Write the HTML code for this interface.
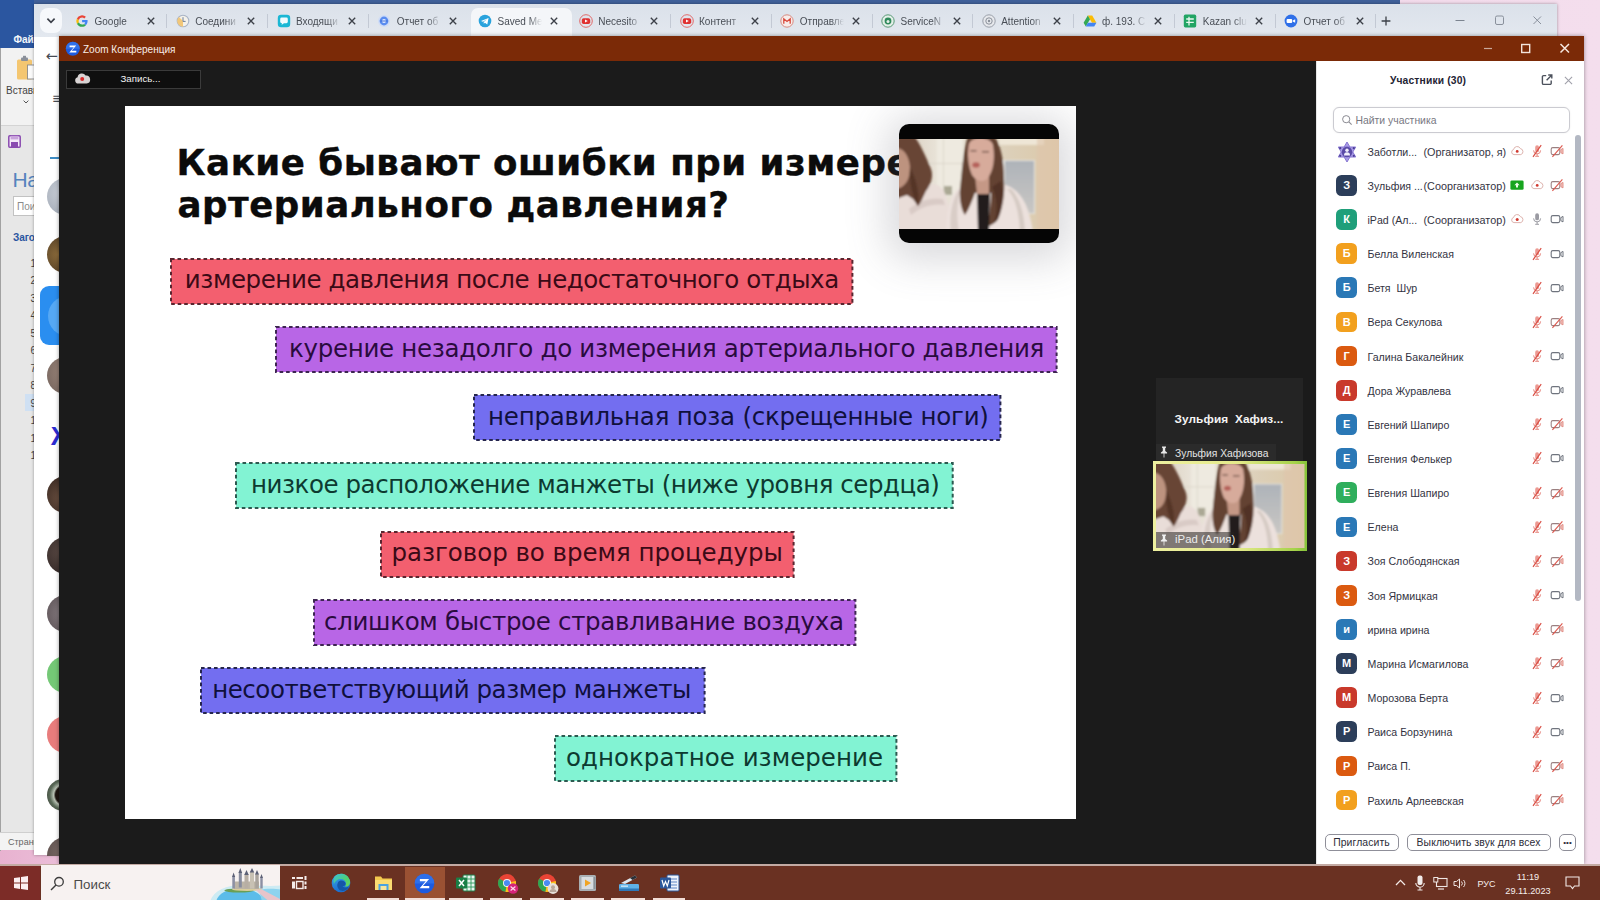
<!DOCTYPE html>
<html lang="ru"><head><meta charset="utf-8"><title>Zoom Конференция</title>
<style>
*{box-sizing:border-box;margin:0;padding:0}
html,body{width:1600px;height:900px;overflow:hidden}
body{position:relative;background:#f1deec;font-family:"Liberation Sans",sans-serif;font-size:11px;color:#222}
.abs{position:absolute}
.t{position:absolute;white-space:nowrap;line-height:1}
svg{position:absolute;overflow:visible}
/* desktop */
#desk{position:absolute;left:0;top:0;width:1600px;height:900px;background:linear-gradient(90deg,#e8b2d0 0,#ebbfd9 70px,#f3dcec 1450px,#f4deed 1600px)}
/* chrome */
#chrome{position:absolute;left:34px;top:4px;width:1523px;height:851px;background:#fff;box-shadow:0 0 3px rgba(0,0,0,.35)}
#tabbar{position:absolute;left:0;top:0;width:100%;height:33px;background:linear-gradient(#dbe1ea,#e3e8ef)}
/* zoom */
#zoom{position:absolute;left:59px;top:36px;width:1525px;height:828px;background:#1b1b1b;box-shadow:0 0 4px rgba(0,0,0,.4)}
#ztitle{position:absolute;left:0;top:0;width:100%;height:25px;background:#7b2a07}
#slide{position:absolute;left:125px;top:106px;width:951px;height:713px;background:#fff;overflow:hidden}
#panel{position:absolute;left:1316px;top:61px;width:268px;height:803px;background:#fff;border-left:1px solid #e6e6e6}
#taskbar{position:absolute;left:0;top:866px;width:1600px;height:34px;background:#6a3122}
/* slide */
.hd{font:bold 35.6px "DejaVu Sans","Liberation Sans",sans-serif;color:#0b0b0b;line-height:42px;-webkit-text-stroke:.4px #0b0b0b}
.bar{position:absolute;height:46px;border:2px dashed #3a2a3a}
.bar.r{background:#f25f6f;border-color:#5a2630}
.bar.p{background:#b765e6;border-color:#3c2450}
.bar.b{background:#726df0;border-color:#26264e}
.bar.g{background:#80f2d2;border-color:#2c5a50}
.bt{font:24.5px "DejaVu Sans","Liberation Sans",sans-serif;line-height:28px}
.bt.r{color:#3b0a16}.bt.p{color:#2a0b3e}.bt.b{color:#10103c}.bt.g{color:#0d3a30}
/* panel */
.av{position:absolute;left:1336px;width:21.3px;height:20.8px;border-radius:5.5px;color:#fff;font:bold 11px "Liberation Sans",sans-serif;line-height:20.8px;text-align:center}
.nm{left:1367.5px;font:10.6px "Liberation Sans",sans-serif;color:#33333f;white-space:pre}
.btn{position:absolute;top:833.5px;height:17.5px;border:1px solid #8f8f99;border-radius:5px;background:#fff;font:10.4px "Liberation Sans",sans-serif;line-height:15.5px;text-align:center;color:#2c2c38;white-space:nowrap;letter-spacing:.1px}
/* tabs */
.tabt{top:16px;width:44px;overflow:hidden;font:10px "Liberation Sans",sans-serif;color:#494e56;line-height:12px;-webkit-mask-image:linear-gradient(90deg,#000 70%,transparent 100%);mask-image:linear-gradient(90deg,#000 70%,transparent 100%)}

</style></head>
<body>
<div id="desk"></div>
<div class="abs" style="left:0;top:0;width:36px;height:850px;background:#e7e7e7"></div>
<div class="abs" style="left:0;top:0;width:1400px;height:47.500px;background:#2b56a0"></div>
<div class="abs" style="left:34px;top:0;width:1366px;height:4px;background:#40609a"></div>
<div class="abs" style="left:0;top:47.500px;width:36px;height:78px;background:#f2f2f2;border-bottom:1px solid #d4d4d4"></div>
<div class="abs" style="left:0;top:47.500px;width:1px;height:803px;background:#a2a2a2"></div>
<div class="t" style="left:13.500px;top:34px;font:bold 10px 'Liberation Sans',sans-serif;color:#f3f6fb">Файл</div>
<svg style="left:16px;top:55px" width="20" height="28" viewBox="0 0 20 28"><rect x="1" y="4.500" width="15" height="20" rx="1.500" fill="#f4c670"/><rect x="5" y="2.500" width="7" height="3.500" rx="1" fill="#8a8f99"/><rect x="7" y=".8" width="3" height="2.500" fill="#8a8f99"/><rect x="11.500" y="10" width="9" height="14" fill="#fbfbfb" stroke="#8b8b8b" stroke-width=".9"/></svg>
<div class="t" style="left:6px;top:84.500px;font:10px 'Liberation Sans',sans-serif;color:#444">Вставить</div>
<svg style="left:23px;top:100px" width="6" height="4" viewBox="0 0 6 4"><path d="M.6,.6 L3,3 L5.400,.6" fill="none" stroke="#555" stroke-width="1"/></svg>
<svg style="left:8px;top:134.500px" width="13" height="13" viewBox="0 0 13 13"><rect x=".8" y=".8" width="11.400" height="11.400" rx="1" fill="#f4e9f8" stroke="#8a4bb0" stroke-width="1.500"/><rect x="3" y="7" width="7" height="5" fill="#8a4bb0"/><rect x="2.600" y=".8" width="7.800" height="3.600" fill="#c9a3dc"/></svg>
<div class="t" style="left:12.500px;top:168px;font:21px 'Liberation Sans',sans-serif;color:#5583bd;letter-spacing:-.3px">Навигация</div>
<div class="abs" style="left:13px;top:195.500px;width:60px;height:20px;background:#fff;border:1px solid #c2c2c2"></div>
<div class="t" style="left:17px;top:201px;font:10px 'Liberation Sans',sans-serif;color:#8a8a8a">Поиск</div>
<div class="t" style="left:13px;top:231.500px;font:bold 10px 'Liberation Sans',sans-serif;color:#2b56a0">Заголовки</div>
<div class="abs" style="left:25px;top:394px;width:12px;height:17px;background:#cfe0f3"></div>
<div class="t" style="left:30.500px;top:257.5px;font:10px 'Liberation Sans',sans-serif;color:#444">1</div>
<div class="t" style="left:30.500px;top:275.0px;font:10px 'Liberation Sans',sans-serif;color:#444">2</div>
<div class="t" style="left:30.500px;top:292.5px;font:10px 'Liberation Sans',sans-serif;color:#444">3</div>
<div class="t" style="left:30.500px;top:310.0px;font:10px 'Liberation Sans',sans-serif;color:#444">4</div>
<div class="t" style="left:30.500px;top:327.5px;font:10px 'Liberation Sans',sans-serif;color:#444">5</div>
<div class="t" style="left:30.500px;top:345.0px;font:10px 'Liberation Sans',sans-serif;color:#444">6</div>
<div class="t" style="left:30.500px;top:362.5px;font:10px 'Liberation Sans',sans-serif;color:#444">7</div>
<div class="t" style="left:30.500px;top:380.0px;font:10px 'Liberation Sans',sans-serif;color:#444">8</div>
<div class="t" style="left:30.500px;top:397.5px;font:10px 'Liberation Sans',sans-serif;color:#444">9</div>
<div class="t" style="left:30.500px;top:415.0px;font:10px 'Liberation Sans',sans-serif;color:#444">10</div>
<div class="t" style="left:30.500px;top:432.5px;font:10px 'Liberation Sans',sans-serif;color:#444">11</div>
<div class="t" style="left:30.500px;top:450.0px;font:10px 'Liberation Sans',sans-serif;color:#444">12</div>
<div class="abs" style="left:0;top:832px;width:36px;height:18px;background:#f3f3f3;border-top:1px solid #cfcfcf"></div>
<div class="t" style="left:8px;top:837px;font:9px 'Liberation Sans',sans-serif;color:#666">Страница</div>
<div id="chrome"><div id="tabbar"></div></div>
<div class="abs" style="left:40px;top:8px;width:21.500px;height:25px;border-radius:8px;background:#f6f8fb"></div>
<svg style="left:46px;top:17px" width="10" height="8" viewBox="0 0 10 8"><path d="M1.400,1.600 L5,5.400 L8.600,1.600" fill="none" stroke="#3b3f48" stroke-width="1.600"/></svg>
<svg style="left:75.0px;top:14.0px" width="14" height="14" viewBox="0 0 14 14"><path d="M12.6,7.1 c0,-.4 0,-.8 -.1,-1.1 H7.1 v2.2 h3.1 a2.7,2.7 0 0 1 -1.1,1.7 l1.8,1.4 c1.1,-1 1.7,-2.5 1.7,-4.2z" fill="#4285f4"/><path d="M7.1,12.8 c1.5,0 2.8,-.5 3.8,-1.4 l-1.8,-1.4 c-.5,.3 -1.200,.6 -2,.6 a3.500,3.500 0 0 1 -3.300,-2.400 l-1.900,1.500 a5.700,5.700 0 0 0 5.200,3.100z" fill="#34a853"/><path d="M3.800,8.200 a3.400,3.400 0 0 1 0,-2.200 l-1.900,-1.500 a5.700,5.700 0 0 0 0,5.200z" fill="#fbbc05"/><path d="M7.100,3.600 c.8,0 1.600,.3 2.200,.8 l1.600,-1.600 a5.700,5.700 0 0 0 -9,1.700 l1.900,1.500 a3.500,3.500 0 0 1 3.300,-2.400z" fill="#ea4335"/></svg>
<div class="t tabt" style="left:94.5px">Google</div>
<svg style="left:146.5px;top:17px" width="8" height="8" viewBox="0 0 8 8"><path d="M.8,.8 L7.200,7.200 M7.200,.8 L.8,7.200" stroke="#3c4048" stroke-width="1.350" fill="none"/></svg>
<div class="abs" style="left:166.2px;top:14px;width:1px;height:14px;background:#c3c9d4"></div>
<svg style="left:175.8px;top:14.0px" width="14" height="14" viewBox="0 0 14 14"><circle cx="7" cy="7" r="5.8" fill="#f4f1ea" stroke="#a9b4c6" stroke-width="1.1"/><path d="M7,7 L7,12.800 a5.800,5.800 0 0 1 -5.800,-5.800 a5.800,5.800 0 0 1 1.700,-4.100z" fill="#f2c779"/><path d="M7,3.200 V7.400 H9.600" stroke="#6c7f9c" stroke-width="1" fill="none"/></svg>
<div class="t tabt" style="left:195.2px">Соедини</div>
<svg style="left:247.2px;top:17px" width="8" height="8" viewBox="0 0 8 8"><path d="M.8,.8 L7.200,7.200 M7.200,.8 L.8,7.200" stroke="#3c4048" stroke-width="1.350" fill="none"/></svg>
<div class="abs" style="left:267.0px;top:14px;width:1px;height:14px;background:#c3c9d4"></div>
<svg style="left:276.5px;top:14.0px" width="14" height="14" viewBox="0 0 14 14"><rect x=".8" y=".8" width="12.4" height="12.4" rx="3.200" fill="#1bb7d4"/><rect x="3.200" y="3.600" width="7.600" height="5.600" rx="1.400" fill="#f2fbfd"/><path d="M5,9 L4.600,11 L7,9z" fill="#f2fbfd"/></svg>
<div class="t tabt" style="left:296.0px">Входящи</div>
<svg style="left:348.0px;top:17px" width="8" height="8" viewBox="0 0 8 8"><path d="M.8,.8 L7.200,7.200 M7.200,.8 L.8,7.200" stroke="#3c4048" stroke-width="1.350" fill="none"/></svg>
<div class="abs" style="left:367.8px;top:14px;width:1px;height:14px;background:#c3c9d4"></div>
<svg style="left:377.2px;top:14.0px" width="14" height="14" viewBox="0 0 14 14"><circle cx="7" cy="7" r="6" fill="#cfdcf6"/><circle cx="7" cy="7" r="4.400" fill="#5b8df0"/><circle cx="7" cy="7" r="2" fill="#e8f0ff"/><path d="M3.200,7 h7.600" stroke="#3f6fd8" stroke-width="1"/></svg>
<div class="t tabt" style="left:396.8px">Отчет об</div>
<svg style="left:448.8px;top:17px" width="8" height="8" viewBox="0 0 8 8"><path d="M.8,.8 L7.200,7.200 M7.200,.8 L.8,7.200" stroke="#3c4048" stroke-width="1.350" fill="none"/></svg>
<div class="abs" style="left:471.0px;top:8px;width:101.2px;height:29px;background:#f4f6f9;border-radius:7px 7px 0 0"></div>
<svg style="left:478.0px;top:14.0px" width="14" height="14" viewBox="0 0 14 14"><circle cx="7" cy="7" r="6.300" fill="#2aa3dd"/><path d="M3,6.900 L10.600,3.900 L9.300,10.400 L6.900,8.700 L5.800,9.800 L5.700,8 L9,5.200 L4.900,7.700z" fill="#fff"/></svg>
<div class="t tabt" style="left:497.5px">Saved Me</div>
<svg style="left:549.5px;top:17px" width="8" height="8" viewBox="0 0 8 8"><path d="M.8,.8 L7.200,7.200 M7.200,.8 L.8,7.200" stroke="#3c4048" stroke-width="1.350" fill="none"/></svg>
<svg style="left:578.8px;top:14.0px" width="14" height="14" viewBox="0 0 14 14"><circle cx="7" cy="7" r="6.300" fill="none" stroke="#e26a6a" stroke-width="1"/><rect x="2.800" y="4.200" width="8.400" height="5.800" rx="1.800" fill="#e03131"/><path d="M6,5.600 L8.800,7.100 L6,8.600z" fill="#fff"/></svg>
<div class="t tabt" style="left:598.2px">Necesito</div>
<svg style="left:650.2px;top:17px" width="8" height="8" viewBox="0 0 8 8"><path d="M.8,.8 L7.200,7.200 M7.200,.8 L.8,7.200" stroke="#3c4048" stroke-width="1.350" fill="none"/></svg>
<div class="abs" style="left:670.0px;top:14px;width:1px;height:14px;background:#c3c9d4"></div>
<svg style="left:679.5px;top:14.0px" width="14" height="14" viewBox="0 0 14 14"><circle cx="7" cy="7" r="6.300" fill="none" stroke="#e26a6a" stroke-width="1"/><rect x="2.800" y="4.200" width="8.400" height="5.800" rx="1.800" fill="#e03131"/><path d="M6,5.600 L8.800,7.100 L6,8.600z" fill="#fff"/></svg>
<div class="t tabt" style="left:699.0px">Контент</div>
<svg style="left:751.0px;top:17px" width="8" height="8" viewBox="0 0 8 8"><path d="M.8,.8 L7.200,7.200 M7.200,.8 L.8,7.200" stroke="#3c4048" stroke-width="1.350" fill="none"/></svg>
<div class="abs" style="left:770.8px;top:14px;width:1px;height:14px;background:#c3c9d4"></div>
<svg style="left:780.2px;top:14.0px" width="14" height="14" viewBox="0 0 14 14"><circle cx="7" cy="7" r="6.200" fill="#f7ecea" stroke="#d88a80" stroke-width="1"/><path d="M3.800,9.800 V4.800 L7,7.400 L10.200,4.800 V9.800" fill="none" stroke="#d9483b" stroke-width="1.300"/></svg>
<div class="t tabt" style="left:799.8px">Отправле</div>
<svg style="left:851.8px;top:17px" width="8" height="8" viewBox="0 0 8 8"><path d="M.8,.8 L7.200,7.200 M7.200,.8 L.8,7.200" stroke="#3c4048" stroke-width="1.350" fill="none"/></svg>
<div class="abs" style="left:871.5px;top:14px;width:1px;height:14px;background:#c3c9d4"></div>
<svg style="left:881.0px;top:14.0px" width="14" height="14" viewBox="0 0 14 14"><circle cx="7" cy="7" r="6.200" fill="#e4efe8" stroke="#5a9a77" stroke-width="1"/><circle cx="7" cy="7" r="3.400" fill="#2f8a5b"/><circle cx="7" cy="7.600" r="1.500" fill="#e4efe8"/></svg>
<div class="t tabt" style="left:900.5px">ServiceN</div>
<svg style="left:952.5px;top:17px" width="8" height="8" viewBox="0 0 8 8"><path d="M.8,.8 L7.200,7.200 M7.200,.8 L.8,7.200" stroke="#3c4048" stroke-width="1.350" fill="none"/></svg>
<div class="abs" style="left:972.2px;top:14px;width:1px;height:14px;background:#c3c9d4"></div>
<svg style="left:981.8px;top:14.0px" width="14" height="14" viewBox="0 0 14 14"><circle cx="7" cy="7" r="6.200" fill="#e6e8ec" stroke="#9aa0aa" stroke-width="1"/><circle cx="7" cy="7" r="3.200" fill="none" stroke="#8a909a" stroke-width="1"/><circle cx="7" cy="7" r="1.200" fill="#8a909a"/></svg>
<div class="t tabt" style="left:1001.2px">Attention</div>
<svg style="left:1053.2px;top:17px" width="8" height="8" viewBox="0 0 8 8"><path d="M.8,.8 L7.200,7.200 M7.200,.8 L.8,7.200" stroke="#3c4048" stroke-width="1.350" fill="none"/></svg>
<div class="abs" style="left:1073.0px;top:14px;width:1px;height:14px;background:#c3c9d4"></div>
<svg style="left:1082.5px;top:14.0px" width="14" height="14" viewBox="0 0 14 14"><path d="M4.800,1.600 H9.200 L13.400,8.800 H9z" fill="#fbbc05"/><path d="M4.800,1.600 L.6,8.800 L2.800,12.400 L7,5.300z" fill="#34a853"/><path d="M4.900,8.800 H13.400 L11.200,12.400 H2.800z" fill="#4285f4"/></svg>
<div class="t tabt" style="left:1102.0px">ф. 193. С</div>
<svg style="left:1154.0px;top:17px" width="8" height="8" viewBox="0 0 8 8"><path d="M.8,.8 L7.200,7.200 M7.200,.8 L.8,7.200" stroke="#3c4048" stroke-width="1.350" fill="none"/></svg>
<div class="abs" style="left:1173.8px;top:14px;width:1px;height:14px;background:#c3c9d4"></div>
<svg style="left:1183.2px;top:14.0px" width="14" height="14" viewBox="0 0 14 14"><rect x=".8" y=".6" width="12.400" height="12.800" rx="1.600" fill="#21a464"/><path d="M3.200,5 h7.600 M3.200,8.400 h7.600 M6,2.800 v8.600" stroke="#e9f8ef" stroke-width="1.300" fill="none"/></svg>
<div class="t tabt" style="left:1202.8px">Kazan clu</div>
<svg style="left:1254.8px;top:17px" width="8" height="8" viewBox="0 0 8 8"><path d="M.8,.8 L7.200,7.200 M7.200,.8 L.8,7.200" stroke="#3c4048" stroke-width="1.350" fill="none"/></svg>
<div class="abs" style="left:1274.5px;top:14px;width:1px;height:14px;background:#c3c9d4"></div>
<svg style="left:1284.0px;top:14.0px" width="14" height="14" viewBox="0 0 14 14"><circle cx="7" cy="7" r="6.400" fill="#2f6fe8"/><rect x="2.600" y="5" width="5.600" height="4" rx="1" fill="#fff"/><path d="M8.800,6.600 L11.200,5.200 V8.800 L8.800,7.400z" fill="#fff"/></svg>
<div class="t tabt" style="left:1303.5px">Отчет об</div>
<svg style="left:1355.5px;top:17px" width="8" height="8" viewBox="0 0 8 8"><path d="M.8,.8 L7.200,7.200 M7.200,.8 L.8,7.200" stroke="#3c4048" stroke-width="1.350" fill="none"/></svg>
<div class="abs" style="left:1375.2px;top:14px;width:1px;height:14px;background:#c3c9d4"></div>
<svg style="left:1380.500px;top:16px" width="10" height="10" viewBox="0 0 10 10"><path d="M5,.6 V9.400 M.6,5 H9.400" stroke="#3c4048" stroke-width="1.300" fill="none"/></svg>
<svg style="left:1450px;top:12px" width="100" height="18" viewBox="0 0 100 18"><path d="M5.500,8.500 H14.500" stroke="#7c8490" stroke-width="1"/><rect x="45.500" y="4" width="8" height="8.500" rx="1.500" fill="none" stroke="#8a919c" stroke-width="1"/><path d="M83.500,4.500 L91,12 M91,4.500 L83.500,12" stroke="#8a919c" stroke-width="1" fill="none"/></svg>
<div class="t" style="left:45.500px;top:48px;font:14.500px 'DejaVu Sans',sans-serif;color:#454a52">←</div>
<div class="t" style="left:52px;top:89.500px;font:14px 'DejaVu Sans',sans-serif;color:#454a52">≡</div>
<div class="abs" style="left:50px;top:156.500px;width:10px;height:2px;background:#3d8cc4"></div>
<div class="abs" style="left:47px;top:177.5px;width:13px;height:37.0px;overflow:hidden"><div style="width:37.0px;height:37.0px;border-radius:50%;background:radial-gradient(circle at 40% 40%,#c9ced6,#9aa3b0)"></div></div>
<div class="abs" style="left:47px;top:235.5px;width:13px;height:37.0px;overflow:hidden"><div style="width:37.0px;height:37.0px;border-radius:50%;background:radial-gradient(circle at 30% 50%,#8a6a3a,#3a2a1c)"></div></div>
<div class="abs" style="left:39.500px;top:285.500px;width:22px;height:59px;border-radius:9px 0 0 9px;background:#2a8ef0;overflow:hidden"><div style="position:absolute;left:8px;top:10px;width:40px;height:40px;border-radius:50%;background:#55a8f4"></div></div>
<div class="abs" style="left:47px;top:356.5px;width:13px;height:37.0px;overflow:hidden"><div style="width:37.0px;height:37.0px;border-radius:50%;background:radial-gradient(circle at 60% 40%,#a58d80,#6f605a)"></div></div>
<div class="t" style="left:51px;top:421px;font:bold 26px 'Liberation Sans',sans-serif;color:#2b2bd0">Ж</div>
<div class="abs" style="left:47px;top:475.5px;width:13px;height:37.0px;overflow:hidden"><div style="width:37.0px;height:37.0px;border-radius:50%;background:radial-gradient(circle at 40% 60%,#6a5040,#2a1c18)"></div></div>
<div class="abs" style="left:47px;top:536.5px;width:13px;height:37.0px;overflow:hidden"><div style="width:37.0px;height:37.0px;border-radius:50%;background:radial-gradient(circle at 40% 40%,#5a4a44,#2a2020)"></div></div>
<div class="abs" style="left:47px;top:595.2px;width:13px;height:37.0px;overflow:hidden"><div style="width:37.0px;height:37.0px;border-radius:50%;background:radial-gradient(circle at 50% 50%,#8a8084,#5a5054)"></div></div>
<div class="abs" style="left:47px;top:655.5px;width:13px;height:37.0px;overflow:hidden"><div style="width:37.0px;height:37.0px;border-radius:50%;background:#74c876"></div></div>
<div class="abs" style="left:47px;top:715.5px;width:13px;height:37.0px;overflow:hidden"><div style="width:37.0px;height:37.0px;border-radius:50%;background:#e87c7c"></div></div>
<div class="abs" style="left:47px;top:778.6px;width:13px;height:32.0px;overflow:hidden"><div style="width:32.0px;height:32.0px;border-radius:50%;background:radial-gradient(circle at 55% 50%,#1c1410 0,#1c1410 38%,#b9c2b4 46%,#5a6a58 62%,#2a2a26 100%)"></div></div>
<div class="abs" style="left:47px;top:837px;width:13px;height:18.500px;overflow:hidden"><div style="width:37px;height:37px;border-radius:50%;background:radial-gradient(circle at 40% 40%,#7a6a66,#4a3e3c)"></div></div>
<div id="zoom"><div id="ztitle"></div></div>
<svg style="left:64.5px;top:40.5px" width="16" height="16" viewBox="0 0 15 15"><circle cx="7.3" cy="7.3" r="6.6" fill="#1d5be0"/><path d="M7.3,.7 a6.6,6.6 0 0 0 -6.6,6.6 L14,7.3 a6.6,6.6 0 0 0 -6.7,-6.6z" fill="#3f83f2" opacity=".55"/><path d="M4.3,4.3 H10.5 L6.2,9.2 H10.6 V10.7 H4 L8.3,5.8 H4.3 Z" fill="#fff"/></svg>
<div class="t" style="left:83px;top:43.5px;font:10px 'Liberation Sans',sans-serif;color:#f9eee8">Zoom Конференция</div>
<svg style="left:1480px;top:40px" width="100" height="18" viewBox="0 0 100 18"><path d="M4,8.5 H12" stroke="#c9a89a" stroke-width="1.2" fill="none"/><rect x="41.7" y="4.5" width="8" height="8" fill="none" stroke="#f3e4dc" stroke-width="1.4"/><path d="M80.5,4 L89,12.5 M89,4 L80.5,12.5" stroke="#f6e8e0" stroke-width="1.5" fill="none"/></svg>
<div class="abs" style="left:65.5px;top:69.5px;width:135.5px;height:19.5px;background:#0f0f0f;border:1px solid #3b3b3b"></div>
<svg style="left:74px;top:72px" width="17" height="13" viewBox="0 0 17 13"><path d="M4.2,11.6 A3.2,3.2 0 0 1 3.6,5.3 A4.3,4.3 0 0 1 11.6,3.6 A3.9,3.9 0 0 1 12.6,11.6 Z" fill="#d9d4d4"/><circle cx="8.2" cy="7" r="2" fill="#d92a2a"/></svg>
<div class="t" style="left:120.5px;top:72.5px;font:9.7px 'Liberation Sans',sans-serif;color:#f0f0f0">Запись...</div>
<div id="slide"></div>
<div class="t hd" style="left:176.5px;top:142px;letter-spacing:.52px">Какие бывают ошибки при измерении</div>
<div class="t hd" style="left:177.5px;top:184.3px;letter-spacing:.52px">артериального давления?</div>
<svg style="left:170.2px;top:257.6px" width="683.4" height="47.0"><rect x="1" y="1" width="681.4" height="45.0" fill="#f35f6f" stroke="#5a2630" stroke-width="2" stroke-dasharray="3.6 2.9"/></svg>
<div class="t bt r" style="left:184.8px;top:266.2px;letter-spacing:-0.43px">измерение давления после недостаточного отдыха</div>
<svg style="left:274.8px;top:325.9px" width="782.6" height="47.0"><rect x="1" y="1" width="780.6" height="45.0" fill="#b866e6" stroke="#3e2552" stroke-width="2" stroke-dasharray="3.6 2.9"/></svg>
<div class="t bt p" style="left:289.0px;top:334.5px;letter-spacing:-0.31px">курение незадолго до измерения артериального давления</div>
<svg style="left:473.2px;top:394.1px" width="528.4" height="47.0"><rect x="1" y="1" width="526.4" height="45.0" fill="#736ef0" stroke="#26264e" stroke-width="2" stroke-dasharray="3.6 2.9"/></svg>
<div class="t bt b" style="left:488.0px;top:402.7px;letter-spacing:-0.23px">неправильная поза (скрещенные ноги)</div>
<svg style="left:235.3px;top:462.4px" width="718.7" height="47.0"><rect x="1" y="1" width="716.7" height="45.0" fill="#82f3d3" stroke="#2c5a50" stroke-width="2" stroke-dasharray="3.6 2.9"/></svg>
<div class="t bt g" style="left:251.0px;top:471.0px;letter-spacing:-0.45px">низкое расположение манжеты (ниже уровня сердца)</div>
<svg style="left:380.2px;top:530.6px" width="414.6" height="47.0"><rect x="1" y="1" width="412.6" height="45.0" fill="#f35f6f" stroke="#5a2630" stroke-width="2" stroke-dasharray="3.6 2.9"/></svg>
<div class="t bt r" style="left:391.5px;top:539.2px;letter-spacing:-0.03px">разговор во время процедуры</div>
<svg style="left:312.8px;top:598.9px" width="543.4" height="47.0"><rect x="1" y="1" width="541.4" height="45.0" fill="#b866e6" stroke="#3e2552" stroke-width="2" stroke-dasharray="3.6 2.9"/></svg>
<div class="t bt p" style="left:324.0px;top:607.5px;letter-spacing:-0.32px">слишком быстрое стравливание воздуха</div>
<svg style="left:200.2px;top:667.1px" width="505.6" height="47.0"><rect x="1" y="1" width="503.6" height="45.0" fill="#736ef0" stroke="#26264e" stroke-width="2" stroke-dasharray="3.6 2.9"/></svg>
<div class="t bt b" style="left:212.2px;top:675.7px;letter-spacing:-0.46px">несоответствующий размер манжеты</div>
<svg style="left:553.8px;top:735.4px" width="343.4" height="47.0"><rect x="1" y="1" width="341.4" height="45.0" fill="#82f3d3" stroke="#2c5a50" stroke-width="2" stroke-dasharray="3.6 2.9"/></svg>
<div class="t bt g" style="left:566.0px;top:744.0px;letter-spacing:0.02px">однократное измерение</div>
<svg width="0" height="0" style="left:0;top:0">
 <defs>
  <filter id="vb" x="-5%" y="-5%" width="110%" height="110%"><feGaussianBlur stdDeviation="1.1"/></filter>
  <linearGradient id="wallg" x1="0" x2="1" y1="0" y2="0">
   <stop offset="0" stop-color="#d9cdbd"/><stop offset=".25" stop-color="#e9e4d9"/><stop offset=".42" stop-color="#e3dccd"/><stop offset=".7" stop-color="#dccfb8"/><stop offset="1" stop-color="#dcc9a8"/>
  </linearGradient>
  <linearGradient id="mirg" x1="0" x2="0" y1="0" y2="1"><stop offset="0" stop-color="#aeb3b9"/><stop offset="1" stop-color="#c9c7c4"/></linearGradient>
  <symbol id="cam" viewBox="0 0 160 90" preserveAspectRatio="none">
   <rect width="160" height="90" fill="url(#wallg)"/>
   <g filter="url(#vb)">
    <rect x="38" y="-3" width="26" height="60" fill="#eeeae0"/>
    <rect x="44" y="-2" width="1" height="55" fill="#dcd7cb"/>
    <rect x="20" y="24" width="45" height="1" fill="#dcd6ca"/>
    <rect x="100" y="-3" width="45" height="9" fill="#eee6d6"/>
    <rect x="104" y="21" width="32" height="54" fill="#e4e2de"/>
    <rect x="106" y="22" width="29" height="52" fill="url(#mirg)"/>
    <rect x="138" y="-3" width="25" height="96" fill="#dfc5aa" opacity=".6"/>
    <rect x="45" y="47" width="8" height="9" fill="#aaa894"/>
    <!-- left woman -->
    <path d="M-3,60 C6,52 20,47 36,45 C46,48 51,60 52,93 L-3,93 Z" fill="#e9ddd8"/>
    <path d="M10,70 C20,62 32,58 44,60 L46,66 C34,64 22,68 12,76z" fill="#d9cbc6"/>
    <path d="M-3,-3 L15,-3 C22,6 27,18 32,30 C35,38 31,47 27,52 C24,58 22,64 19,67 L14,60 L8,56 L-3,60 Z" fill="#684535"/>
    <path d="M-3,9 C4,9 10,16 11,28 C11,40 7,48 -3,50 Z" fill="#bd937f"/>
    <path d="M11,28 C16,38 21,52 19,67 C13,58 10,42 11,28 Z" fill="#553628"/>
    <!-- right woman coat -->
    <path d="M47,93 C48,66 52,52 64,47 L104,45 C122,50 130,66 134,93 Z" fill="#ece1dd"/>
    <path d="M63,48 C58,60 57,76 60,93 L52,93 C50,74 54,56 63,48Z" fill="#d9cdc7"/>
    <path d="M108,50 C116,58 120,72 121,93 L126,93 C125,72 120,58 112,50z" fill="#d6cbc4"/>
    <!-- hair right -->
    <path d="M69,-3 C64,12 63,32 61,50 C60,62 63,72 66,76 C70,70 73,62 76,54 L92,54 C92,66 90,80 88,88 C92,86 97,84 99,80 C104,68 106,54 105,40 C105,22 102,6 95,-3 Z" fill="#644333"/>
    <path d="M93,48 C98,58 99,72 95,84 L99,80 C104,68 105,54 102,42 Z" fill="#513326"/>
    <!-- shirt -->
    <path d="M78,53 L91,53 L90,93 L79,93 Z" fill="#231a1c"/>
    <!-- neck & face -->
    <path d="M76,36 L90,36 L90,55 L78,55 Z" fill="#c59886"/>
    <path d="M70,5 C73,-3 91,-3 94,6 C96,18 95,32 88,40 C83,44 77,42 73,36 C69,27 68,14 70,5 Z" fill="#d7ab9b"/>
    <ellipse cx="77" cy="26" rx="3.800" ry="2.700" fill="#b5605a"/>
    <rect x="71.500" y="11" width="6" height="1.500" fill="#7a5a50"/><rect x="83" y="12" width="7" height="1.500" fill="#7a5a50"/>
   </g>
  </symbol>
 </defs>
</svg>
<!-- video in slide -->
<div class="abs" style="left:125px;top:106px;width:951px;height:713px;overflow:hidden;pointer-events:none"><div class="abs" style="left:774px;top:18px;width:159.5px;height:118.5px;border-radius:10px;background:#050505;box-shadow:0 5px 42px 12px rgba(95,95,108,.24)"></div></div>
<svg style="left:899px;top:138.5px" width="160" height="90"><use href="#cam" width="160" height="90"/></svg>
<!-- tiles -->
<div class="abs" style="left:1155.5px;top:377.5px;width:147px;height:83px;background:#242424"></div>
<div class="t" style="left:1155.5px;top:412px;width:147px;text-align:center;font:bold 11.8px 'Liberation Sans',sans-serif;color:#f4f4f4;letter-spacing:.1px;white-space:pre">Зульфия  Хафиз...</div>
<div class="abs" style="left:1155.5px;top:444px;width:120px;height:16px;background:#2b2b2b"></div>
<svg style="left:1159px;top:446px" width="10" height="12" viewBox="0 0 10 12"><path d="M3,0.5 h4 v1 l-0.8,0.8 v2.6 l1.9,1.7 v0.9 H1.9 v-0.9 l1.9,-1.7 V2.3 L3,1.5 Z M4.6,7.5 h0.8 v4 h-0.8z" fill="#e8e8e8"/></svg>
<div class="t" style="left:1175px;top:447.5px;font:10.3px 'Liberation Sans',sans-serif;color:#e4e4e4">Зульфия Хафизова</div>
<div class="abs" style="left:1152.5px;top:461px;width:154.5px;height:90px;background:linear-gradient(90deg,#eef0a0 0,#e4ea8a 55%,#a6d24a 92%,#86c43a 100%)"></div>
<svg style="left:1155.5px;top:464px" width="148.5" height="84"><use href="#cam" width="148.5" height="84"/></svg>
<div class="abs" style="left:1155.5px;top:532px;width:78px;height:16px;background:rgba(40,36,34,.55)"></div>
<svg style="left:1159px;top:534px" width="10" height="12" viewBox="0 0 10 12"><path d="M3,0.5 h4 v1 l-0.8,0.8 v2.6 l1.9,1.7 v0.9 H1.9 v-0.9 l1.9,-1.7 V2.3 L3,1.5 Z M4.6,7.5 h0.8 v4 h-0.8z" fill="#f0f0f0"/></svg>
<div class="t" style="left:1175px;top:533px;font:11.4px 'Liberation Sans',sans-serif;color:#ececec">iPad (Алия)</div>
<div id="panel"></div>
<svg width="0" height="0" style="left:0;top:0"><defs>
<g id="i-micoff"><path d="M5.2,3.2 a1.9,1.9 0 0 1 3.8,0 v3.2 a1.9,1.9 0 0 1 -3.8,0z" fill="#ec9a93"/><path d="M3.6,6.4 a3.5,3.5 0 0 0 7,0 M7.1,9.9 v2.2 M5.2,12.3 h3.8" stroke="#e5877f" stroke-width="1" fill="none"/><path d="M11.2,1.2 L3,12.8" stroke="#d94f45" stroke-width="1.2" fill="none"/></g>
<g id="i-mic"><path d="M5.2,3.2 a1.9,1.9 0 0 1 3.8,0 v3.2 a1.9,1.9 0 0 1 -3.8,0z" fill="#9a9aa2"/><path d="M3.6,6.4 a3.5,3.5 0 0 0 7,0 M7.1,9.9 v2.2 M5.2,12.3 h3.8" stroke="#9a9aa2" stroke-width="1" fill="none"/></g>
<g id="i-cam"><rect x="1.2" y="3.6" width="8.6" height="7" rx="1.6" fill="none" stroke="#6f747e" stroke-width="1.1"/><path d="M10.9,5.6 L13,4.4 V9.9 L10.9,8.7z" fill="none" stroke="#6f747e" stroke-width="1"/></g>
<g id="i-camoff"><rect x="1.2" y="3.6" width="8.6" height="7" rx="1.6" fill="none" stroke="#9a7f80" stroke-width="1.05"/><path d="M10.9,5.6 L13,4.4 V9.9 L10.9,8.7z" fill="#f3c6c0" stroke="#e08a82" stroke-width=".9"/><path d="M12.4,1.4 L2.4,12.8" stroke="#dd5a50" stroke-width="1.15" fill="none"/></g>
<g id="i-cloud"><path d="M4,10.6 A2.6,2.6 0 0 1 3.6,5.5 A3.6,3.6 0 0 1 10.4,4.6 A3.1,3.1 0 0 1 10.8,10.6 Z" fill="none" stroke="#d9aaa5" stroke-width=".9"/><circle cx="7.2" cy="7.4" r="1.4" fill="#d23a30"/></g>
<g id="i-cloudrec"><path d="M4,10.6 A2.6,2.6 0 0 1 3.6,5.5 A3.6,3.6 0 0 1 10.4,4.6 A3.1,3.1 0 0 1 10.8,10.6 Z" fill="none" stroke="#d9aaa5" stroke-width=".9"/><circle cx="7.2" cy="7.4" r="1.5" fill="#d23a30"/></g>
<g id="i-share"><rect x="0.4" y="2.4" width="13.2" height="9.4" rx="1.4" fill="#17a51f"/><path d="M7,4.4 L9.6,7.2 H8 V9.6 H6 V7.2 H4.4z" fill="#eafbe8"/></g>
</defs></svg>
<div class="t" style="left:1316px;width:224px;top:75px;text-align:center;font:bold 10.3px 'Liberation Sans',sans-serif;color:#232333;letter-spacing:.15px">Участники (30)</div>
<svg style="left:1541px;top:74px" width="12" height="12" viewBox="0 0 12 12"><path d="M5.2,1.6 H2.6 A1.2,1.2 0 0 0 1.4,2.8 V9.2 A1.2,1.2 0 0 0 2.6,10.4 H9 A1.2,1.2 0 0 0 10.2,9.2 V6.6" fill="none" stroke="#4c515c" stroke-width="1.4"/><path d="M5.6,6.2 L10.6,1.2 M7.2,1 H10.8 V4.6" fill="none" stroke="#4c515c" stroke-width="1.4"/></svg>
<svg style="left:1564px;top:75.5px" width="9" height="9" viewBox="0 0 10 10"><path d="M1,1 L9,9 M9,1 L1,9" stroke="#a0a0aa" stroke-width="1.2" fill="none"/></svg>
<div class="abs" style="left:1333px;top:106.5px;width:236.5px;height:26.5px;border:1px solid #cbcbd1;border-radius:6px;background:#fff;box-shadow:0 0 2px rgba(0,0,0,.08)"></div>
<svg style="left:1341px;top:113.5px" width="12" height="12" viewBox="0 0 12 12"><circle cx="5.2" cy="5.2" r="3.6" fill="none" stroke="#8a8a92" stroke-width="1"/><path d="M7.9,7.9 L10.6,10.6" stroke="#8a8a92" stroke-width="1.1"/></svg>
<div class="t" style="left:1355.5px;top:114.5px;font:10.4px 'Liberation Sans',sans-serif;color:#77777f">Найти участника</div>
<div class="abs" style="left:1575px;top:135px;width:6px;height:466px;border-radius:3px;background:#b3b8c3"></div>
<svg style="left:1335.5px;top:141.0px" width="22" height="22" viewBox="0 0 22 22"><g fill="#a99be6" stroke="#8676d2" stroke-width="1" stroke-linejoin="round"><path d="M11,1 L19.700,16 H2.300z"/><path d="M11,21 L2.300,6 H19.700z"/></g><circle cx="11" cy="11" r="5.200" fill="#5a4aa6"/><circle cx="11" cy="9.300" r="1.700" fill="#f1eefc"/><path d="M8,14.500 a3,3.200 0 0 1 6,0z" fill="#f1eefc"/><circle cx="4.200" cy="7.200" r="1.100" fill="#4b3d96"/><circle cx="17.800" cy="7.200" r="1.100" fill="#4b3d96"/><circle cx="4.200" cy="14.800" r="1.100" fill="#4b3d96"/><circle cx="17.800" cy="14.800" r="1.100" fill="#4b3d96"/></svg>
<div class="t nm" style="top:145.5px">Заботли...</div>
<div class="t nm" style="left:1423.5px;top:145.5px;font-size:10.8px">(Организатор, я)</div>
<svg style="left:1509.7px;top:144.0px" width="14" height="14" viewBox="0 0 14 14"><use href="#i-cloud"/></svg>
<svg style="left:1529.7px;top:144.0px" width="14" height="14" viewBox="0 0 14 14"><use href="#i-micoff"/></svg>
<svg style="left:1549.7px;top:144.0px" width="14" height="14" viewBox="0 0 14 14"><use href="#i-camoff"/></svg>
<div class="av" style="top:174.9px;background:#2c3e5a">З</div>
<div class="t nm" style="top:179.7px">Зульфия ...</div>
<div class="t nm" style="left:1423.5px;top:179.7px;font-size:10.8px">(Соорганизатор)</div>
<svg style="left:1509.7px;top:178.2px" width="14" height="14" viewBox="0 0 14 14"><use href="#i-share"/></svg>
<svg style="left:1529.7px;top:178.2px" width="14" height="14" viewBox="0 0 14 14"><use href="#i-cloud"/></svg>
<svg style="left:1549.7px;top:178.2px" width="14" height="14" viewBox="0 0 14 14"><use href="#i-camoff"/></svg>
<div class="av" style="top:209.0px;background:#1f9f7a">К</div>
<div class="t nm" style="top:213.8px">iPad (Ал...</div>
<div class="t nm" style="left:1423.5px;top:213.8px;font-size:10.8px">(Соорганизатор)</div>
<svg style="left:1509.7px;top:212.3px" width="14" height="14" viewBox="0 0 14 14"><use href="#i-cloudrec"/></svg>
<svg style="left:1529.7px;top:212.3px" width="14" height="14" viewBox="0 0 14 14"><use href="#i-mic"/></svg>
<svg style="left:1549.7px;top:212.3px" width="14" height="14" viewBox="0 0 14 14"><use href="#i-cam"/></svg>
<div class="av" style="top:243.2px;background:#f2a01e">Б</div>
<div class="t nm" style="top:248.0px">Белла Виленская</div>
<svg style="left:1529.7px;top:246.5px" width="14" height="14" viewBox="0 0 14 14"><use href="#i-micoff"/></svg>
<svg style="left:1549.7px;top:246.5px" width="14" height="14" viewBox="0 0 14 14"><use href="#i-cam"/></svg>
<div class="av" style="top:277.3px;background:#2a78b6">Б</div>
<div class="t nm" style="top:282.1px">Бетя  Шур</div>
<svg style="left:1529.7px;top:280.6px" width="14" height="14" viewBox="0 0 14 14"><use href="#i-micoff"/></svg>
<svg style="left:1549.7px;top:280.6px" width="14" height="14" viewBox="0 0 14 14"><use href="#i-cam"/></svg>
<div class="av" style="top:311.5px;background:#f2a01e">В</div>
<div class="t nm" style="top:316.3px">Вера Секулова</div>
<svg style="left:1529.7px;top:314.8px" width="14" height="14" viewBox="0 0 14 14"><use href="#i-micoff"/></svg>
<svg style="left:1549.7px;top:314.8px" width="14" height="14" viewBox="0 0 14 14"><use href="#i-camoff"/></svg>
<div class="av" style="top:345.7px;background:#db5a10">Г</div>
<div class="t nm" style="top:350.5px">Галина Бакалейник</div>
<svg style="left:1529.7px;top:349.0px" width="14" height="14" viewBox="0 0 14 14"><use href="#i-micoff"/></svg>
<svg style="left:1549.7px;top:349.0px" width="14" height="14" viewBox="0 0 14 14"><use href="#i-cam"/></svg>
<div class="av" style="top:379.8px;background:#c9392b">Д</div>
<div class="t nm" style="top:384.6px">Дора Журавлева</div>
<svg style="left:1529.7px;top:383.1px" width="14" height="14" viewBox="0 0 14 14"><use href="#i-micoff"/></svg>
<svg style="left:1549.7px;top:383.1px" width="14" height="14" viewBox="0 0 14 14"><use href="#i-cam"/></svg>
<div class="av" style="top:414.0px;background:#2a78b6">Е</div>
<div class="t nm" style="top:418.8px">Евгений Шапиро</div>
<svg style="left:1529.7px;top:417.3px" width="14" height="14" viewBox="0 0 14 14"><use href="#i-micoff"/></svg>
<svg style="left:1549.7px;top:417.3px" width="14" height="14" viewBox="0 0 14 14"><use href="#i-camoff"/></svg>
<div class="av" style="top:448.1px;background:#2a78b6">Е</div>
<div class="t nm" style="top:452.9px">Евгения Фелькер</div>
<svg style="left:1529.7px;top:451.4px" width="14" height="14" viewBox="0 0 14 14"><use href="#i-micoff"/></svg>
<svg style="left:1549.7px;top:451.4px" width="14" height="14" viewBox="0 0 14 14"><use href="#i-cam"/></svg>
<div class="av" style="top:482.3px;background:#2fae5c">Е</div>
<div class="t nm" style="top:487.1px">Евгения Шапиро</div>
<svg style="left:1529.7px;top:485.6px" width="14" height="14" viewBox="0 0 14 14"><use href="#i-micoff"/></svg>
<svg style="left:1549.7px;top:485.6px" width="14" height="14" viewBox="0 0 14 14"><use href="#i-camoff"/></svg>
<div class="av" style="top:516.5px;background:#2a78b6">Е</div>
<div class="t nm" style="top:521.3px">Елена</div>
<svg style="left:1529.7px;top:519.8px" width="14" height="14" viewBox="0 0 14 14"><use href="#i-micoff"/></svg>
<svg style="left:1549.7px;top:519.8px" width="14" height="14" viewBox="0 0 14 14"><use href="#i-camoff"/></svg>
<div class="av" style="top:550.6px;background:#c9392b">З</div>
<div class="t nm" style="top:555.4px">Зоя Слободянская</div>
<svg style="left:1529.7px;top:553.9px" width="14" height="14" viewBox="0 0 14 14"><use href="#i-micoff"/></svg>
<svg style="left:1549.7px;top:553.9px" width="14" height="14" viewBox="0 0 14 14"><use href="#i-camoff"/></svg>
<div class="av" style="top:584.8px;background:#db5a10">З</div>
<div class="t nm" style="top:589.6px">Зоя Ярмицкая</div>
<svg style="left:1529.7px;top:588.1px" width="14" height="14" viewBox="0 0 14 14"><use href="#i-micoff"/></svg>
<svg style="left:1549.7px;top:588.1px" width="14" height="14" viewBox="0 0 14 14"><use href="#i-cam"/></svg>
<div class="av" style="top:618.9px;background:#2a78b6">и</div>
<div class="t nm" style="top:623.7px">ирина ирина</div>
<svg style="left:1529.7px;top:622.2px" width="14" height="14" viewBox="0 0 14 14"><use href="#i-micoff"/></svg>
<svg style="left:1549.7px;top:622.2px" width="14" height="14" viewBox="0 0 14 14"><use href="#i-camoff"/></svg>
<div class="av" style="top:653.1px;background:#2c3e5a">М</div>
<div class="t nm" style="top:657.9px">Марина Исмагилова</div>
<svg style="left:1529.7px;top:656.4px" width="14" height="14" viewBox="0 0 14 14"><use href="#i-micoff"/></svg>
<svg style="left:1549.7px;top:656.4px" width="14" height="14" viewBox="0 0 14 14"><use href="#i-camoff"/></svg>
<div class="av" style="top:687.3px;background:#c9392b">М</div>
<div class="t nm" style="top:692.1px">Морозова Берта</div>
<svg style="left:1529.7px;top:690.6px" width="14" height="14" viewBox="0 0 14 14"><use href="#i-micoff"/></svg>
<svg style="left:1549.7px;top:690.6px" width="14" height="14" viewBox="0 0 14 14"><use href="#i-cam"/></svg>
<div class="av" style="top:721.4px;background:#2c3e5a">Р</div>
<div class="t nm" style="top:726.2px">Раиса Борзунина</div>
<svg style="left:1529.7px;top:724.7px" width="14" height="14" viewBox="0 0 14 14"><use href="#i-micoff"/></svg>
<svg style="left:1549.7px;top:724.7px" width="14" height="14" viewBox="0 0 14 14"><use href="#i-cam"/></svg>
<div class="av" style="top:755.6px;background:#db5a10">Р</div>
<div class="t nm" style="top:760.4px">Раиса П.</div>
<svg style="left:1529.7px;top:758.9px" width="14" height="14" viewBox="0 0 14 14"><use href="#i-micoff"/></svg>
<svg style="left:1549.7px;top:758.9px" width="14" height="14" viewBox="0 0 14 14"><use href="#i-camoff"/></svg>
<div class="av" style="top:789.7px;background:#f2a01e">Р</div>
<div class="t nm" style="top:794.5px">Рахиль Арлеевская</div>
<svg style="left:1529.7px;top:793.0px" width="14" height="14" viewBox="0 0 14 14"><use href="#i-micoff"/></svg>
<svg style="left:1549.7px;top:793.0px" width="14" height="14" viewBox="0 0 14 14"><use href="#i-camoff"/></svg>
<div class="btn" style="left:1324.5px;width:74px">Пригласить</div>
<div class="btn" style="left:1406.5px;width:144px">Выключить звук для всех</div>
<div class="btn" style="left:1559px;width:17px;letter-spacing:0;font-size:8px">•••</div>
<div id="taskbar"></div>
<div class="abs" style="left:0;top:864px;width:1600px;height:2px;background:#c3aaa3"></div>
<div class="abs" style="left:0;top:866px;width:40px;height:34px;background:#7c2c27"></div>
<svg style="left:13.500px;top:876px" width="14" height="14" viewBox="0 0 14 14"><path d="M0,2 L6,1.200 V6.600 H0z M7,1 L14,0 V6.600 H7z M0,7.500 H6 V12.900 L0,12.100z M7,7.500 H14 V14 L7,13z" fill="#fbeff0"/></svg>
<div class="abs" style="left:40.500px;top:865px;width:239.500px;height:35px;background:#f7f2f1"></div>
<svg style="left:200px;top:866.500px" width="80" height="33.500" viewBox="200 866.500 80 33.500"><defs><filter id="sb" x="-10%" y="-10%" width="120%" height="120%"><feGaussianBlur stdDeviation=".55"/></filter><clipPath id="sbc"><rect x="200" y="866.500" width="80" height="33.500"/></clipPath></defs><g filter="url(#sb)" clip-path="url(#sbc)"><path d="M210,901 C214,889 228,884 244,884.500 C258,885 270,886 281,885 V901z" fill="#cdebf3"/><path d="M216,901 C219,891 230,887.500 245,888.500 C256,889.500 262,895 265,901z" fill="#5cbce9"/><path d="M262,901 L259,889.500 C266,887.500 275,888 281,889 V901z" fill="#8dd3ee"/><ellipse cx="239" cy="890" rx="14.500" ry="2" fill="#6a9f55"/><ellipse cx="247" cy="888.800" rx="15" ry="1.700" fill="#d9cd9b"/><rect x="234" y="881" width="25" height="7.500" fill="#bcb4a6"/><rect x="232.300" y="876" width="2.600" height="12" fill="#8c90a4"/><rect x="238.800" y="872" width="3" height="15" fill="#878c9e"/><rect x="244.500" y="874" width="4" height="14" fill="#b7aea4"/><rect x="250" y="871.500" width="4" height="16.500" fill="#c8c1b3"/><rect x="255.300" y="873.500" width="3.400" height="14.500" fill="#a9a39c"/><rect x="260.300" y="877" width="2.400" height="11" fill="#8b8fa3"/><path d="M232,876.500 L233.600,872 L235.200,876.500z M238.400,872.500 L240.300,867.500 L242.200,872.500z M244.200,874.500 L246.500,869.500 L248.800,874.500z M249.700,872 L252,867.500 L254.300,872z M255,874 L257,869.500 L259,874z M260,877.500 L261.500,873.500 L263,877.500z" fill="#5c6176"/><path d="M255,889 L262,889 L281,899 V901 L269,901z" fill="#e7c4ca"/></g></svg>
<svg style="left:49.500px;top:876px" width="15" height="15" viewBox="0 0 15 15"><circle cx="9" cy="5.800" r="4.300" fill="none" stroke="#3c3c3c" stroke-width="1.300"/><path d="M6,9 L1,14" stroke="#3c3c3c" stroke-width="1.500"/></svg>
<div class="t" style="left:73.500px;top:876.500px;font:13.300px 'Liberation Sans',sans-serif;color:#4a4a4a">Поиск</div>
<svg style="left:292px;top:876px" width="15" height="14" viewBox="0 0 15 14"><g fill="#f6ecea"><rect x="0" y="1" width="3" height="2"/><rect x="4.500" y="1" width="6.500" height="2"/><rect x="12.500" y="0" width="2" height="4"/><rect x="0" y="5.500" width="3" height="7"/><rect x="4.500" y="5.500" width="6.500" height="7" fill="none" stroke="#f6ecea" stroke-width="1.400"/><rect x="12.500" y="5.500" width="2" height="3"/><rect x="12.500" y="10" width="2" height="3"/></g></svg>
<svg style="left:331px;top:873px" width="20" height="20" viewBox="0 0 20 20"><defs><linearGradient id="edg" x1="0" y1="0" x2=".3" y2="1"><stop offset="0" stop-color="#3aa6e8"/><stop offset="1" stop-color="#1b6fd0"/></linearGradient><linearGradient id="edg2" x1="0" y1="0" x2="1" y2="1"><stop offset="0" stop-color="#39c0e0"/><stop offset=".6" stop-color="#4fd070"/><stop offset="1" stop-color="#66d85a"/></linearGradient></defs><circle cx="10" cy="10" r="9.300" fill="url(#edg)"/><path d="M4,3 C9,-1 17,0 19,8 C19.500,12 17,14 14,13.500 C16,11 15,6.500 10,6 C6.500,6 4,8 3,11 C2,8 2.500,5 4,3z" fill="url(#edg2)"/><path d="M7,9.500 c1.500,-3 6.500,-2.500 7.500,.5 c.5,2 -1,3.500 -3,3 c1.500,2 4.500,2 6.500,.5 c-1.500,4 -6.500,6 -10,3 c-2,-2 -2.200,-5 -1,-7z" fill="#1556a8"/></svg>
<svg style="left:373.500px;top:874px" width="19" height="18" viewBox="0 0 19 18"><path d="M1,2.500 H7 L8.500,4.500 H18 V16 H1z" fill="#f3c94f"/><path d="M1,6 H18 V16 H1z" fill="#fbdc72"/><rect x="4.500" y="10" width="10" height="6" fill="#4aa3e0"/><rect x="6.500" y="12" width="6" height="4" fill="#f6e6a0"/></svg>
<div class="abs" style="left:405px;top:866.500px;width:39.500px;height:33.500px;background:#9a5133"></div>
<svg style="left:413.500px;top:872.500px" width="21" height="21" viewBox="0 0 15 15"><circle cx="7.500" cy="7.500" r="7" fill="#1d5be0"/><path d="M7.500,.5 a7,7 0 0 0 -7,7 H14.500 a7,7 0 0 0 -7,-7z" fill="#3f83f2" opacity=".5"/><path d="M4.200,4.300 H10.800 L6.400,9.300 H10.900 V10.900 H4 L8.400,5.900 H4.200 Z" fill="#fff"/></svg>
<svg style="left:455.500px;top:874px" width="20" height="18" viewBox="0 0 20 18"><rect x="7" y="1" width="12" height="16" rx="1" fill="#e9f5ee" stroke="#1e7c48" stroke-width="1"/><path d="M11,1 V17 M15,1 V17 M7,5 H19 M7,9 H19 M7,13 H19" stroke="#2a9a5c" stroke-width=".9"/><rect x="0" y="3.500" width="11" height="11" rx="1" fill="#1a7f46"/><path d="M3,6 L8,12 M8,6 L3,12" stroke="#fff" stroke-width="1.500"/></svg>
<svg style="left:496.5px;top:873px" width="22" height="22" viewBox="0 0 22 22"><circle cx="10" cy="10" r="9" fill="#e94435"/><path d="M10,10 L2.200,5.500 A9,9 0 0 0 8.500,18.900z" fill="#2fa652"/><path d="M10,10 L8.500,18.900 A9,9 0 0 0 18.800,8z" fill="#f9c11a"/><circle cx="10" cy="10" r="4" fill="#f4f4f4"/><circle cx="10" cy="10" r="3.100" fill="#4a8af4"/><circle cx="16" cy="15.500" r="5.200" fill="#d6247a"/><path d="M13.600,13.500 L18.400,17.500 M18.400,13.500 L13.600,17.500" stroke="#ffd6ea" stroke-width="1.200"/></svg>
<svg style="left:537.0px;top:873px" width="22" height="22" viewBox="0 0 22 22"><circle cx="10" cy="10" r="9" fill="#e94435"/><path d="M10,10 L2.200,5.500 A9,9 0 0 0 8.500,18.900z" fill="#2fa652"/><path d="M10,10 L8.500,18.900 A9,9 0 0 0 18.800,8z" fill="#f9c11a"/><circle cx="10" cy="10" r="4" fill="#f4f4f4"/><circle cx="10" cy="10" r="3.100" fill="#4a8af4"/><circle cx="16" cy="15.500" r="5.400" fill="#e8e0d8"/><circle cx="16" cy="14.300" r="2" fill="#b9a79a"/><path d="M12.500,19 a3.500,3 0 0 1 7,0z" fill="#b9a79a"/></svg>
<svg style="left:578px;top:874px" width="19" height="18" viewBox="0 0 19 18"><rect x="1" y="1" width="17" height="16" rx="1.500" fill="#a9b0b4"/><rect x="3.500" y="3" width="12" height="12" fill="#d9dde0"/><path d="M7,5.500 L13,9 L7,12.500z" fill="#f0a422"/><rect x="15.500" y="3" width="2" height="12" fill="#8a9298"/></svg>
<svg style="left:617.500px;top:873.500px" width="22" height="19" viewBox="0 0 22 19"><path d="M3,9 L17,1.500 L19,3.500 L7,10z" fill="#dfe9f2"/><path d="M12,4 L17,1.500 L19,3.500 L14.500,6z" fill="#2a2f36"/><rect x="1" y="10" width="20" height="6.500" rx="1.200" fill="#5fb0e6"/><rect x="1" y="14.500" width="20" height="2.500" fill="#2f78b8"/><rect x="3" y="11.500" width="7" height="1.300" fill="#d6ecfa"/></svg>
<svg style="left:659.500px;top:874px" width="20" height="18" viewBox="0 0 20 18"><rect x="7" y="1" width="12" height="16" rx="1" fill="#eef3fb" stroke="#2b579a" stroke-width="1"/><path d="M10.500,5 H17 M10.500,8 H17 M10.500,11 H17 M10.500,14 H17" stroke="#5c86c6" stroke-width="1.100"/><rect x="0" y="3.500" width="11" height="11" rx="1" fill="#2b579a"/><path d="M2,6 L3.700,12 L5.500,7.500 L7.300,12 L9,6" stroke="#fff" stroke-width="1.200" fill="none"/></svg>
<div class="abs" style="left:366.7px;top:898px;width:32.3px;height:2px;background:#f2ddd6"></div>
<div class="abs" style="left:405.0px;top:898px;width:39.5px;height:2px;background:#f2ddd6"></div>
<div class="abs" style="left:449.0px;top:898px;width:33.7px;height:2px;background:#f2ddd6"></div>
<div class="abs" style="left:489.5px;top:898px;width:32.5px;height:2px;background:#f2ddd6"></div>
<div class="abs" style="left:530.0px;top:898px;width:33.8px;height:2px;background:#f2ddd6"></div>
<div class="abs" style="left:570.6px;top:898px;width:33.4px;height:2px;background:#f2ddd6"></div>
<div class="abs" style="left:611.0px;top:898px;width:34.0px;height:2px;background:#f2ddd6"></div>
<div class="abs" style="left:652.8px;top:898px;width:32.2px;height:2px;background:#f2ddd6"></div>
<svg style="left:1394.500px;top:879px" width="11" height="7" viewBox="0 0 11 7"><path d="M1,6 L5.500,1.400 L10,6" fill="none" stroke="#f4ebe8" stroke-width="1.300"/></svg>
<svg style="left:1414.500px;top:874.500px" width="10" height="16" viewBox="0 0 10 16"><rect x="2.500" y=".5" width="5" height="9.500" rx="2" fill="#f2ecea"/><path d="M.8,8 a4.200,4.200 0 0 0 8.400,0 M5,12.200 V14.500 M2.500,15 H7.500" stroke="#f2ecea" stroke-width="1.100" fill="none"/></svg>
<svg style="left:1433px;top:876.500px" width="15" height="13" viewBox="0 0 15 13"><rect x="3.500" y="1.500" width="10.500" height="8" fill="none" stroke="#efe6e3" stroke-width="1.100"/><rect x=".8" y=".5" width="4" height="4.500" fill="#683021" stroke="#efe6e3" stroke-width="1"/><path d="M5,12 H11" stroke="#efe6e3" stroke-width="1.200"/></svg>
<svg style="left:1453px;top:876.500px" width="15" height="13" viewBox="0 0 15 13"><path d="M1,4.500 H3.500 L6.500,2 V11 L3.500,8.500 H1z" fill="none" stroke="#efe6e3" stroke-width="1"/><path d="M8.500,4.500 a3,3 0 0 1 0,4 M10.500,3 a5,5 0 0 1 0,7" fill="none" stroke="#efe6e3" stroke-width="1"/></svg>
<div class="t" style="left:1477.500px;top:878.500px;font:9px 'Liberation Sans',sans-serif;color:#f6efec">РУС</div>
<div class="t" style="left:1503px;width:50px;text-align:center;top:871.500px;font:9.200px 'Liberation Sans',sans-serif;color:#f6efec">11:19</div>
<div class="t" style="left:1503px;width:50px;text-align:center;top:886px;font:9.200px 'Liberation Sans',sans-serif;color:#f6efec">29.11.2023</div>
<svg style="left:1565px;top:876px" width="15" height="14" viewBox="0 0 15 14"><path d="M1,1 H14 V10 H9.500 L7.500,12.500 L5.500,10 H1z" fill="none" stroke="#f2eae7" stroke-width="1.100"/></svg>

</body></html>
